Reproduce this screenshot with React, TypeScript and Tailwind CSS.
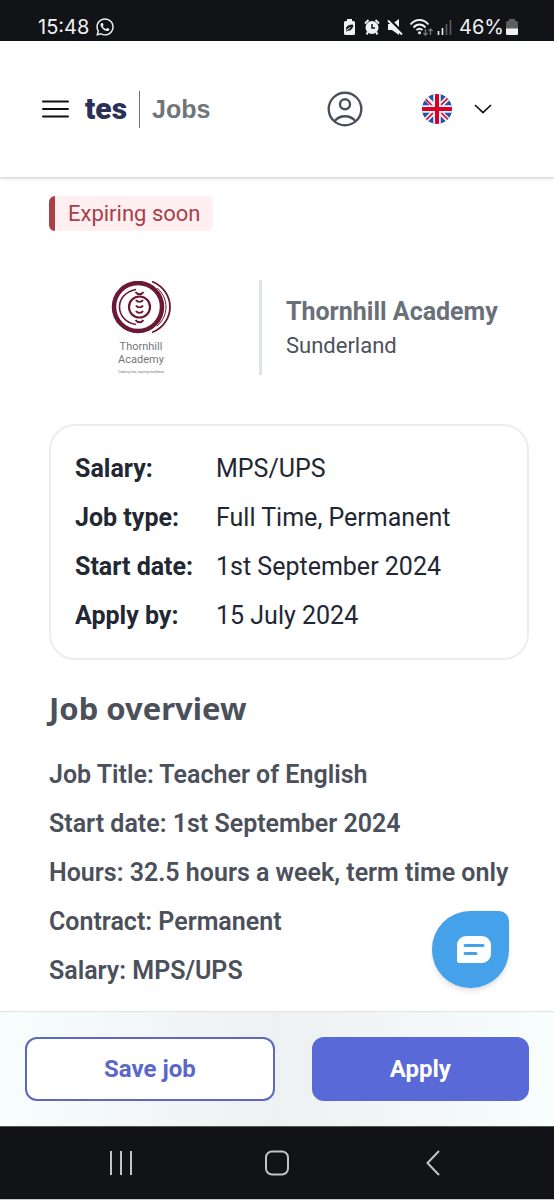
import { FaWhatsapp } from 'react-icons/fa'

const details = [
  { label: 'Salary:', value: 'MPS/UPS' },
  { label: 'Job type:', value: 'Full Time, Permanent' },
  { label: 'Start date:', value: '1st September 2024' },
  { label: 'Apply by:', value: '15 July 2024' },
]

const overview = [
  'Job Title: Teacher of English',
  'Start date: 1st September 2024',
  'Hours: 32.5 hours a week, term time only',
  'Contract: Permanent',
  'Salary: MPS/UPS',
]

function StatusBar() {
  return (
    <div className="flex h-[41px] items-end justify-between bg-[#121317] pr-9 pl-[38px] pb-0.5 font-['Inter',sans-serif] text-xl leading-6 text-[#f1f1f3]">
      <div className="flex items-center gap-1.5">
        <span>15:48</span>
        <FaWhatsapp size={20} />
      </div>
      <div className="flex items-center">
        <svg width="116" height="20" viewBox="0 0 116 20" fill="none" aria-hidden="true">
          {/* battery saver */}
          <path d="M4 2h5v2h1.500a1.500 1.500 0 0 1 1.500 1.500v11a1.500 1.500 0 0 1-1.500 1.500h-8a1.500 1.500 0 0 1-1.500-1.500v-11A1.500 1.500 0 0 1 2.500 4H4z" fill="currentColor" />
          <path d="M10 8c-5 0-7 1.500-6.500 5 3.500 1 6-.5 6.500-5zM3 14.500l4-3.500" fill="#121317" stroke="#121317" strokeWidth="0.800" />
          <path d="M3.500 13l4-2.500" stroke="#f1f1f3" />
          {/* alarm */}
          <circle cx="29" cy="10.500" r="6.500" fill="currentColor" />
          <path d="M22 6.500l3.500-3.500M36 6.500L32.500 3M25 15l-1.500 2.500M33 15l1.500 2.500" stroke="currentColor" strokeWidth="1.900" />
          <path d="M29 7v4h3" stroke="#121317" strokeWidth="1.500" />
          {/* muted speaker */}
          <path d="M45 7h4l7-5v16l-7-5h-4z" fill="currentColor" />
          <path d="M46 2l14 14" stroke="#121317" strokeWidth="2.500" />
          <path d="M45 3.500l14 14" stroke="currentColor" strokeWidth="1.800" />
          {/* wifi */}
          <path d="M67.500 7.500c5-6 13-6 18 0M70.500 10.500c3.500-4 8.500-4 12 0M73.500 13.200c2-2 4-2 6 0" stroke="currentColor" strokeWidth="1.900" />
          <circle cx="76.500" cy="15.800" r="1.500" fill="currentColor" />
          <path d="M82.500 12v6M80.500 16l2 2 2-2M87.500 18v-6M85.500 14l2-2 2 2" stroke="#77787d" strokeWidth="1.300" />
          {/* signal */}
          <path d="M95.500 14v4M99.500 11v7" stroke="currentColor" strokeWidth="1.600" />
          <path d="M103.500 7v11M107.500 3v15" stroke="#5b5c61" strokeWidth="1.600" />
        </svg>
        <span>46%</span>
        <svg className="ml-0.5" width="12" height="16" viewBox="0 0 12 16" aria-hidden="true">
          <path d="M3 0h6v2h1.500A1.500 1.500 0 0 1 12 3.500V10H0V3.500A1.500 1.500 0 0 1 1.500 2H3z" fill="#5d5e62" />
          <path d="M0 9.500h12v5a1.500 1.500 0 0 1-1.500 1.500h-9A1.500 1.500 0 0 1 0 14.500z" fill="#f1f1f3" />
        </svg>
      </div>
    </div>
  )
}

function UnionFlag() {
  return (
    <svg width="30" height="30" viewBox="0 0 30 30" aria-hidden="true">
      <defs>
        <clipPath id="flag">
          <circle cx="15" cy="15" r="15" />
        </clipPath>
      </defs>
      <g clipPath="url(#flag)">
        <path d="M0 0h30v30H0z" fill="#1f55a5" />
        <path d="M0 0l30 30M30 0L0 30" stroke="#f3f3f8" strokeWidth="5" />
        <path d="M2 3.500l10 10M18.500 18l10 10M28 2L17 13M13 17L2 28" stroke="#d80027" strokeWidth="1.700" />
        <path d="M15 0v30M0 15h30" stroke="#f3f3f8" strokeWidth="7.500" />
        <path d="M15 0v30M0 15h30" stroke="#d80027" strokeWidth="4" />
      </g>
    </svg>
  )
}

function Header() {
  return (
    <header className="flex h-[137px] items-center justify-between border-b border-[#dcdcdc] bg-white pr-[62px] pl-[42px] shadow-sm">
      <div className="flex items-center">
        <button type="button" aria-label="Menu">
          <svg width="27" height="18" viewBox="0 0 27 18" stroke="#111" strokeWidth="2" strokeLinecap="round" aria-hidden="true">
            <path d="M1 1.500h25M1 9h25M1 16.500h25" />
          </svg>
        </button>
        <a href="#" className="ml-4 font-['Roboto',sans-serif] text-[30px] leading-10 font-black text-[#2a3158]">tes</a>
        <span className="ml-3 h-[37px] w-px bg-[#6d7178]" />
        <a href="#" className="ml-3 pt-0.5 font-['Liberation_Sans',sans-serif] text-[25px] font-bold text-[#70757b]">Jobs</a>
      </div>
      <div className="flex items-center">
        <button type="button" aria-label="Account">
          <svg width="36" height="36" viewBox="0 0 36 36" fill="none" stroke="#4a505b" strokeWidth="2.400" aria-hidden="true">
            <circle cx="18" cy="18" r="16.300" />
            <circle cx="18" cy="13.300" r="5" />
            <path d="M7.500 30.300c5.500-6.700 15.500-6.700 21 0" />
          </svg>
        </button>
        <button type="button" aria-label="Country" className="ml-[59px] flex items-center gap-[22px]">
          <UnionFlag />
          <svg width="18" height="10" viewBox="0 0 18 10" fill="none" stroke="#111" strokeWidth="1.700" aria-hidden="true">
            <path d="M1 1l8 7.500L17 1" />
          </svg>
        </button>
      </div>
    </header>
  )
}

function SchoolLogo() {
  return (
    <svg width="64" height="94" viewBox="0 0 64 94" fill="none" role="img" aria-label="Thornhill Academy">
      <g stroke="#6b1735">
        <circle cx="28" cy="26" r="24" strokeWidth="4.500" />
        <path d="M42 0.500c24 10 24 41 0 51" strokeWidth="1.800" />
        <path d="M47 7c12 10 12 28 0 38" strokeWidth="1" />
        <path d="M26 8.500c-22 4-22 31 0 35" strokeWidth="1.600" />
        <circle cx="29.500" cy="26" r="10.500" strokeWidth="2.200" />
        <path d="M25.500 11c2 3 6 3 8 0M26 19c1.500 2.500 5.500 2.500 7 0M26 24.500c1.500 2.500 5.500 2.500 7 0M26 30c1.500 2.500 5.500 2.500 7 0M25.500 39c2 3 6 3 8 0" strokeWidth="1.900" />
      </g>
      <g fill="#77777a" textAnchor="middle" fontFamily="Roboto, sans-serif">
        <text x="31" y="69" fontSize="11">Thornhill</text>
        <text x="31" y="82" fontSize="11">Academy</text>
        <text x="31" y="92" fontSize="3">Creating lives, inspiring excellence</text>
      </g>
    </svg>
  )
}

function ChatButton() {
  return (
    <button
      type="button"
      aria-label="Chat"
      className="absolute right-[45px] bottom-[23px] flex size-[77px] items-center justify-center rounded-[38px] rounded-tr-[10px] bg-[#45a2ea] pl-1.5 shadow-md"
    >
      <svg width="34" height="27" viewBox="0 0 34 27" fill="none" aria-hidden="true">
        <path d="M9 0h16a9 9 0 0 1 9 9v9a9 9 0 0 1-9 9H2a2 2 0 0 1-2-2V9a9 9 0 0 1 9-9z" fill="#fff" />
        <path d="M8 9.500h18M8 17.500h11" stroke="#45a2ea" strokeWidth="3" strokeLinecap="round" />
      </svg>
    </button>
  )
}

function SystemNav() {
  return (
    <nav className="grid h-[74px] grid-cols-[1fr_70px_1fr] items-center border-t border-b border-t-[#55575a] border-b-[#c8c9ca] bg-[#121317] text-[#c4c4c6]">
      <button type="button" aria-label="Recent apps" className="justify-self-center">
        <svg width="24" height="26" viewBox="0 0 24 26" stroke="currentColor" strokeWidth="2" aria-hidden="true">
          <path d="M2 1v24M12 1v24M22 1v24" />
        </svg>
      </button>
      <button type="button" aria-label="Home" className="justify-self-center">
        <svg width="24" height="26" viewBox="0 0 24 26" fill="none" stroke="currentColor" strokeWidth="2" aria-hidden="true">
          <rect x="1" y="1.500" width="22" height="23" rx="6" />
        </svg>
      </button>
      <button type="button" aria-label="Back" className="justify-self-center">
        <svg width="14" height="26" viewBox="0 0 14 26" fill="none" stroke="currentColor" strokeWidth="2" aria-hidden="true">
          <path d="M13 1L1.500 13 13 25" />
        </svg>
      </button>
    </nav>
  )
}

export default function App() {
  return (
    <div className="flex min-h-screen flex-col bg-white font-['Roboto',sans-serif] text-[#4b505b]">
      <StatusBar />
      <Header />

      <main className="relative flex-1 pt-[18px] pr-[25px] pl-[49px]">
        <div className="flex">
          <span className="flex h-[35px] items-center rounded-md border-l-6 border-[#a8404a] bg-[#ffeff0] px-[13px] text-[22px] text-[#a8404a]">
            Expiring soon
          </span>
        </div>

        <section className="mt-[49px] flex h-[95px] items-center">
          <div className="flex w-[210px] justify-center pr-6">
            <SchoolLogo />
          </div>
          <div className="flex h-full flex-col justify-center border-l-3 border-[#e0e3e6] pl-6">
            <h2 className="text-[25px] leading-9 font-bold text-[#6a7079]">Thornhill Academy</h2>
            <p className="text-[22px] leading-8">Sunderland</p>
          </div>
        </section>

        <dl className="mt-[49px] rounded-[26px] border-2 border-[#ededee] px-6 py-[18px] text-[25px] leading-[49px] text-[#222733]">
          {details.map((d) => (
            <div key={d.label} className="flex">
              <dt className="w-[141px] font-bold">{d.label}</dt>
              <dd>{d.value}</dd>
            </div>
          ))}
        </dl>

        <h1 className="mt-7 font-['Noto_Sans',sans-serif] text-[31px] leading-10 font-bold">Job overview</h1>
        <div className="mt-[22px] text-[25px] leading-[49px] font-semibold">
          {overview.map((line) => (
            <p key={line}>{line}</p>
          ))}
        </div>

        <ChatButton />
      </main>

      <footer className="flex gap-[37px] border-t border-[#dfe3e4] bg-linear-to-r from-[#f8fdfe] via-[#edf1f2] to-[#f8fdfe] p-[25px] text-2xl font-bold">
        <button type="button" className="h-16 flex-[250] rounded-xl border-2 border-[#5b69c0] bg-white text-[#5b67c9]">
          Save job
        </button>
        <button type="button" className="h-16 flex-[217] rounded-xl border-2 border-[#5969d7] bg-[#5969d7] text-white">
          Apply
        </button>
      </footer>
      <SystemNav />
    </div>
  )
}
